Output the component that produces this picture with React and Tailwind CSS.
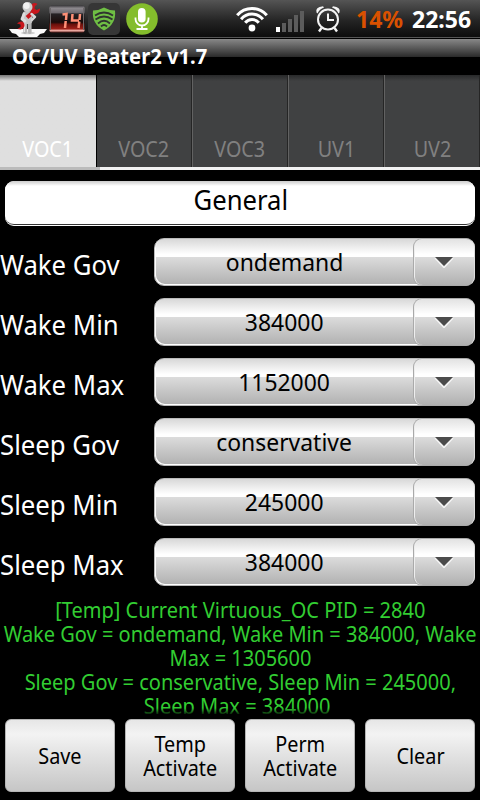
import React from 'react';

const TABS = [
  { label: 'VOC1', active: true },
  { label: 'VOC2', first: true },
  { label: 'VOC3' },
  { label: 'UV1' },
  { label: 'UV2' },
];

const SETTINGS = [
  { label: 'Wake Gov', value: 'ondemand' },
  { label: 'Wake Min', value: '384000' },
  { label: 'Wake Max', value: '1152000' },
  { label: 'Sleep Gov', value: 'conservative' },
  { label: 'Sleep Min', value: '245000' },
  { label: 'Sleep Max', value: '384000' },
];

const LOG = [
  '[Temp] Current Virtuous_OC PID = 2840',
  'Wake Gov = ondemand, Wake Min = 384000, Wake',
  'Max = 1305600',
  'Sleep Gov = conservative, Sleep Min = 245000,',
  'Sleep Max = 384000',
];

const RepairIcon = () => (
  <svg width="38" height="38" viewBox="0 0 38 38" className="shrink-0">
    <path d="M0 29H38L35 33 31 34 28 37H10L7 34 3 33Z" fill="#fafafa" />
    <ellipse cx="19" cy="33" rx="7" ry="1.300" fill="#d0d0d0" />
    <path d="M16.300 22 16 32M20.700 22V32" stroke="#b4b4b4" strokeWidth="3.800" strokeLinecap="round" />
    <path d="M15.800 22 15.300 32" stroke="#e6e6e6" strokeWidth="1.500" />
    <rect x="13.500" y="11" width="10" height="13" rx="4" fill="#c6c6c6" />
    <path d="M15 14 13 19 16 21" stroke="#dedede" strokeWidth="2.800" fill="none" strokeLinecap="round" strokeLinejoin="round" />
    <path d="M18 17.500 25 11.500" stroke="#c8171d" strokeWidth="4" />
    <path d="M28.500 4A5 5 0 0 0 22 11.500Q24 15 28 13.500 31 12 31 8.500L27.500 10 25.500 8.500 26 6Z" fill="#c8171d" />
    <path d="M8 23.500Q12 20 15 23 17 27 12 29.500L8.500 29 11.500 27V24.500Z" fill="#c8171d" />
    <path d="M22.500 14 26 17 23 20" stroke="#d8d8d8" strokeWidth="2.400" fill="none" strokeLinecap="round" strokeLinejoin="round" />
    <circle cx="18.500" cy="7" r="5" fill="#cfcfcf" />
    <circle cx="17.500" cy="5.800" r="3.200" fill="#f2f2f2" />
  </svg>
);

const BatteryIcon = () => (
  <svg width="36" height="28" viewBox="0 0 36 28" className="shrink-0">
    <defs>
      <linearGradient id="cell" x2="0" y2="1">
        <stop offset="0" stopColor="#3c3a3e" />
        <stop offset="0.1" stopColor="#8d898e" />
        <stop offset="0.26" stopColor="#6f6a70" />
        <stop offset="0.32" stopColor="#252124" />
        <stop offset="0.62" stopColor="#1a0b0a" />
        <stop offset="0.7" stopColor="#6a100b" />
        <stop offset="0.86" stopColor="#9c2018" />
        <stop offset="0.93" stopColor="#eeb0a8" />
        <stop offset="1" stopColor="#5a1e1a" />
      </linearGradient>
    </defs>
    <rect x="0.500" y="0.500" width="35" height="27" rx="2" fill="url(#cell)" />
    <path d="M1.500 3V25M34.500 3V25" stroke="#6d686a" />
    <path d="M13.500 9.500 17.500 9 17 15M16.700 16 16 23M23.500 9 23 15.500H30M31 9 30.500 15M30.300 16.500 29.500 23" stroke="#ff8f76" strokeWidth="2.500" fill="none" />
  </svg>
);

const ShieldIcon = () => (
  <svg width="32" height="32" viewBox="0 0 32 32" className="shrink-0">
    <rect width="32" height="32" rx="5" fill="#363636" />
    <path d="M5 7.500Q11 7.500 16 4.500Q21 7.500 27 7.500Q28.500 21 16 27.500Q3.500 21 5 7.500Z" fill="#6fbf44" />
    <g fill="none" stroke="#303430" strokeWidth="1.800">
      <path d="M7 12.500Q16 6.500 25 12.500" />
      <path d="M7.500 16.500Q16 10.500 24.500 16.500" />
      <path d="M10 20.500Q16 15 22 20.500" />
      <path d="M13 23.500Q16 20.500 19 23.500" />
    </g>
  </svg>
);

const MicIcon = () => (
  <svg width="32" height="32" viewBox="0 0 32 32" className="shrink-0">
    <circle cx="16" cy="16" r="15.800" fill="#84bd2c" />
    <rect x="12" y="5" width="7.600" height="14.500" rx="3.800" fill="#fff" />
    <path d="M9.500 14.500V16A6.500 6.500 0 0 0 22.500 16V14.500M16 22.500V26M10.500 26H21.500" fill="none" stroke="#fff" strokeWidth="1.800" />
  </svg>
);

const WifiIcon = () => (
  <svg width="32" height="26" viewBox="0 0 32 26" className="shrink-0">
    <g fill="none" stroke="#fff" strokeWidth="3">
      <path d="M1.200 9.300A19.500 19.500 0 0 1 30.800 9.300" />
      <path d="M5.100 13.300A14 14 0 0 1 26.900 13.300" />
      <path d="M9.200 16.800A8.700 8.700 0 0 1 22.800 16.800" />
    </g>
    <circle cx="16" cy="22" r="3.400" fill="#fff" />
  </svg>
);

const SignalIcon = () => (
  <svg width="30" height="21" viewBox="0 0 30 21" className="shrink-0">
    <path d="M1 16H5V21H1Z" fill="#fff" />
    <path d="M7 12H11V21H7ZM13 8H17V21H13ZM19 4H23V21H19ZM25 0H29V21H25Z" fill="#5c5c5c" />
  </svg>
);

const AlarmIcon = () => (
  <svg width="26" height="28" viewBox="0 0 26 28" className="shrink-0">
    <g fill="none" stroke="#f4f4f4" strokeWidth="2">
      <circle cx="13" cy="14.500" r="10" />
      <path d="M13 8.500V15H19" />
      <path d="M6.500 23 4 26.500M19.500 23 22 26.500" strokeWidth="2.400" />
    </g>
    <path d="M1.500 7.500Q0 2 8 1.200L9 2.500Q4.500 4 2.500 8.500ZM24.500 7.500Q26 2 18 1.200L17 2.500Q21.500 4 23.500 8.500Z" fill="#f4f4f4" />
  </svg>
);

const StatusBar = () => (
  <header className="flex h-[39px] items-center border-b border-black bg-linear-to-b from-[#555] via-[#242424] via-55% to-[#0b0b0b] pl-[9px] shadow-[inset_0_-1px_0_#555]">
    <RepairIcon />
    <div className="ml-0.5"><BatteryIcon /></div>
    <div className="ml-[3px]"><ShieldIcon /></div>
    <div className="ml-1.5"><MicIcon /></div>
    <div className="ml-[78px]"><WifiIcon /></div>
    <div className="ml-[7px] mt-[5px]"><SignalIcon /></div>
    <div className="ml-[10px]"><AlarmIcon /></div>
    <span className="ml-[15px] w-[56px] text-[23px] font-bold leading-[38px] text-[#d95100]">14%</span>
    <span className="text-[23px] font-bold leading-[38px] text-white">22:56</span>
  </header>
);

const tabStyle = ({ active, first }) => {
  if (active) return 'bg-linear-to-b from-[#777] to-[#dfdfdf] to-[6px] text-white';
  if (first) return 'border-l border-l-black border-r border-r-[#252525] bg-linear-to-b from-[#28292a] to-[#404142] to-[6px] text-[#808080]';
  return 'border-l border-l-[#626262] border-r border-r-[#252525] bg-linear-to-b from-[#28292a] to-[#404142] to-[6px] text-[#808080]';
};

const Tab = (props) => (
  <div className={`flex h-[92px] w-24 items-end justify-center pb-1 ${tabStyle(props)}`}>
    <span className="scale-x-[0.92] text-[21.5px] leading-[28px]">{props.label}</span>
  </div>
);

const Spinner = ({ value }) => (
  <div className="flex h-12 w-[321px] rounded-[10px] border border-[#bbb] bg-[linear-gradient(to_bottom,#d8d8d8,#fff_33%,#fff_39%,#dcdcdc_39%,#b0b0b0)] text-black shadow-[inset_1px_-1px_0_#fff]">
    <div className="flex flex-1 items-center justify-center pl-px">
      <span className="scale-x-[0.955] text-[24px] leading-[46px]">{value}</span>
    </div>
    <div className="-my-px -mr-px flex w-[62px] justify-center rounded-[9px] border border-[#aaa] border-r-[#ddd] bg-[linear-gradient(to_bottom,#e2e2e2,#fff_33%,#fff_39%,#dcdcdc_39%,#b0b0b0)] pt-[18px] shadow-[inset_1px_0_0_#eee]">
      <svg width="20" height="11" viewBox="0 0 20 11">
        <path d="M1 1 10 10.500 19 1" fill="none" stroke="#f4f4f4" strokeWidth="1.500" />
        <path d="M1 0H19L10 9Z" fill="#4b4b4b" />
      </svg>
    </div>
  </div>
);

const ActionButton = ({ children }) => (
  <button className="flex h-[73px] w-[110px] items-center justify-center rounded-[6px] border border-[#b5b5b5] bg-linear-to-b from-[#e6e6e6] via-[#f3f3f3] via-20% to-[#c6c6c6] text-center text-[21px] leading-6 text-black">
    <span className="scale-x-[0.945]">{children}</span>
  </button>
);

const App = () => (
  <div className="flex h-[800px] w-[480px] flex-col overflow-hidden bg-black font-['Noto_Sans',sans-serif] text-white">
    <StatusBar />
    <div className="flex h-9 items-start bg-[linear-gradient(to_bottom,#888,#2a2a2a_50%,#000_50%)] pl-3">
      <h1 className="origin-left scale-x-[0.96] text-[21px] font-bold leading-[34px]">OC/UV Beater2 v1.7</h1>
    </div>

    <nav className="flex">
      {TABS.map((tab) => <Tab key={tab.label} {...tab} />)}
    </nav>
    <div className="flex h-[3px] bg-[#f2f2f2]">
      <div className="w-[100px] bg-[#bbb]" />
    </div>

    <div className="mx-[5px] mt-[11px] flex h-[45px] rounded-[9px] border-b border-white bg-white text-black">
      <div className="flex w-full justify-center rounded-[9px] border-b border-[#333] bg-linear-to-b from-[#ccc] to-white to-[5px] pl-px">
        <span className="scale-x-[0.95] text-[27px] leading-[38px]">General</span>
      </div>
    </div>

    <div className="mt-3 flex flex-col gap-3">
      {SETTINGS.map(({ label, value }) => (
        <div key={label} className="flex h-12 items-center">
          <div className="w-[154px] pt-1.5">
            <span className="inline-block origin-left scale-x-[0.953] text-[27px] leading-[42px]">{label}</span>
          </div>
          <Spinner value={value} />
        </div>
      ))}
    </div>

    <div className="relative mt-3 flex h-[116px] flex-col items-center overflow-hidden text-[21px] leading-6 text-[#32cd32]">
      {LOG.map((line) => (
        <p key={line} className="shrink-0 scale-x-[0.953] whitespace-pre last-of-type:pr-[6px]">{line}</p>
      ))}
      <div className="absolute inset-x-0 bottom-0 h-[6px] bg-linear-to-b from-transparent to-black/80" />
    </div>

    <div className="mt-[5px] flex gap-[10px] px-[5px]">
      <ActionButton>Save</ActionButton>
      <ActionButton>Temp<br />Activate</ActionButton>
      <ActionButton>Perm<br />Activate</ActionButton>
      <ActionButton>Clear</ActionButton>
    </div>
  </div>
);

export default App;
